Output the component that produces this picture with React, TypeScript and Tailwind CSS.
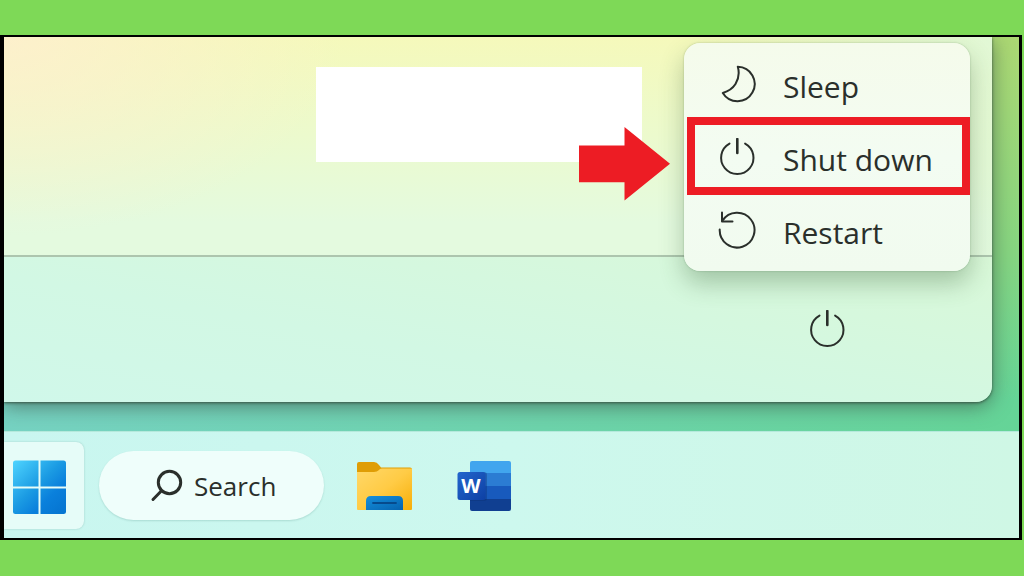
import type { ReactNode } from 'react';

interface IconProps {
  children: ReactNode;
}

function LineIcon({ children }: IconProps) {
  return (
    <svg
      viewBox="0 0 40 40"
      className="h-10 w-10 shrink-0"
      fill="none"
      stroke="currentColor"
      strokeWidth="2"
      strokeLinecap="round"
      strokeLinejoin="round"
      aria-hidden="true"
    >
      {children}
    </svg>
  );
}

function SleepIcon() {
  return (
    <LineIcon>
      <path d="M20.8 1.8A17.2 17.2 0 1 1 5.8 28C12 26 16 23 18.5 19C21.5 14 22.6 8 20.8 1.8Z" />
    </LineIcon>
  );
}

function PowerIcon() {
  return (
    <LineIcon>
      <path d="M12.5 5.6A16.2 16.2 0 1 0 28.1 5.6" />
      <path d="M20.3 1V15" strokeWidth="2.6" />
    </LineIcon>
  );
}

function RestartIcon() {
  return (
    <LineIcon>
      <path d="M2.7 18.5A17.4 17.4 0 1 0 5.4 9.8" />
      <path d="M5 1.5V10.5H15.5" />
    </LineIcon>
  );
}

function WindowsLogo() {
  return (
    <svg viewBox="0 0 54 54" className="h-[54px] w-[54px]" aria-hidden="true">
      <defs>
        <linearGradient id="panes" gradientUnits="userSpaceOnUse" x1="0" y1="0" x2="48" y2="50">
          <stop offset="0" stopColor="#4fd5ff" />
          <stop offset="0.5" stopColor="#1b9be3" />
          <stop offset="0.75" stopColor="#0a80dc" />
          <stop offset="1" stopColor="#0676d2" />
        </linearGradient>
      </defs>
      <path
        fill="url(#panes)"
        d="M2.5 0.5H25.5V26.5H0V3Q0 0.5 2.5 0.5ZM27.5 0.5H50.5Q53 0.5 53 3V26.5H27.5ZM0 28.5H25.5V54H2.5Q0 54 0 51.5ZM27.5 28.5H53V51.5Q53 54 50.5 54H27.5Z"
      />
    </svg>
  );
}

function FolderIcon() {
  return (
    <svg viewBox="0 0 56 50" className="h-[50px] w-14" aria-hidden="true">
      <defs>
        <linearGradient id="folder" x1="0" y1="0" x2="1" y2="1">
          <stop offset="0" stopColor="#ffd869" />
          <stop offset="0.5" stopColor="#ffcb45" />
          <stop offset="1" stopColor="#f7ae08" />
        </linearGradient>
        <linearGradient id="dock" x1="0" y1="0" x2="1" y2="1">
          <stop offset="0" stopColor="#1590dc" />
          <stop offset="1" stopColor="#0562ae" />
        </linearGradient>
      </defs>
      <path fill="#df9d05" d="M2 1H17Q20 1 22 4L24 6.5H53Q55 6.5 55 8.5V14H0V3Q0 1 2 1Z" />
      <path fill="url(#folder)" d="M0 11H17Q20 11 22 9L23 8Q24 7.5 25 7.5H55V48Q55 49 54 49H1Q0 49 0 48Z" />
      <path fill="url(#dock)" d="M9 49V40Q9 35 14 35H41Q46 35 46 40V49Z" />
      <path stroke="#064a8c" strokeWidth="1.8" strokeLinecap="round" d="M16 42H39" />
    </svg>
  );
}

function WordIcon() {
  return (
    <svg viewBox="0 0 56 52" className="h-[52px] w-14" aria-hidden="true">
      <defs>
        <linearGradient id="badge" x1="0" y1="0" x2="1" y2="1">
          <stop offset="0" stopColor="#2366cd" />
          <stop offset="1" stopColor="#0d40a4" />
        </linearGradient>
      </defs>
      <path fill="#41a5ee" d="M15 1H52Q54 1 54 3V13H13V3Q13 1 15 1Z" />
      <path fill="#2b7cd3" d="M13 13H54V26H13Z" />
      <path fill="#185abd" d="M13 26H54V39H13Z" />
      <path fill="#103f91" d="M13 39H54V49Q54 51 52 51H15Q13 51 13 49Z" />
      <path fill="#0b2f70" fillOpacity="0.35" d="M13 12H27Q30 12 30 15V38Q30 41 27 41H13Z" />
      <rect x="0.5" y="12" width="28" height="28" rx="2.5" fill="url(#badge)" />
      <text
        x="14"
        y="33"
        textAnchor="middle"
        fill="#fff"
        fontSize="20"
        fontWeight="700"
        fontFamily="Open Sans, sans-serif"
      >
        W
      </text>
    </svg>
  );
}

const powerOptions = [
  { label: 'Sleep', icon: <SleepIcon /> },
  { label: 'Shut down', icon: <PowerIcon />, highlighted: true },
  { label: 'Restart', icon: <RestartIcon /> },
];

function PowerMenu() {
  return (
    <div
      role="menu"
      className="absolute top-[6px] right-[22px] w-[286px] rounded-2xl bg-linear-to-b from-[#f5fbeb] via-[#f3fcf2] to-[#f1fbef] pt-[5px] pb-1 shadow-[0_12px_24px_rgba(50,90,50,0.32),0_0_2px_rgba(50,90,50,0.35)]"
    >
      {powerOptions.map((option) => (
        <button
          key={option.label}
          role="menuitem"
          className="relative flex h-[73px] w-full items-center gap-[26px] pl-[33px] text-left text-[30px] leading-10"
        >
          {option.icon}
          <span className="pt-1">{option.label}</span>
          {option.highlighted && (
            <span className="absolute -top-1 right-0 -bottom-px left-[3px] border-8 border-[#ed1c24]" />
          )}
        </button>
      ))}

      {/* Pointer to the highlighted option */}
      <svg viewBox="0 0 91 74" className="absolute top-[84px] -left-[105px] h-[74px] w-[91px]" aria-hidden="true">
        <path fill="#ed1c24" d="M0 18.5H45.5V0L91 36.7L45.5 73.5V55.3H0Z" />
      </svg>
    </div>
  );
}

function StartPanel() {
  return (
    <section className="relative mr-[27px] rounded-br-2xl shadow-[0_4px_20px_rgba(60,80,70,0.65),0_1px_3px_rgba(50,80,60,0.9)]">
      <div className="h-[220px] border-b-2 border-[#adc5ae] bg-[radial-gradient(ellipse_340px_200px_at_0_0,rgba(255,238,208,0.8),transparent),radial-gradient(ellipse_300px_300px_at_100%_0,rgba(222,248,218,0.85),transparent),linear-gradient(to_bottom,#f5f9bb,#edfacb_40%,#e4fadf_85%)] pt-[30px] pl-[312px]">
        <div className="h-[95px] w-[326px] bg-white" />
      </div>
      <div className="flex h-[145px] items-center justify-end rounded-br-2xl bg-[linear-gradient(10deg,#d0f8ea,#d2f8e4_40%,#d9f8d8)] pr-[137px]">
        <button aria-label="Power" className="p-2">
          <PowerIcon />
        </button>
      </div>
      <PowerMenu />
    </section>
  );
}

function Taskbar() {
  return (
    <nav className="relative flex h-[107px] items-center border-t border-[#b5e9dc] bg-linear-to-r from-[#c9f6f0] via-[#cdf8ee] to-[#cff7e5] pt-px">
      <button
        aria-label="Start"
        className="flex h-[87px] w-20 items-center rounded-r-lg bg-[#e6fcf8] pt-0.5 pl-[9px] shadow-[0_0_2px_rgba(40,110,100,0.3)]"
      >
        <WindowsLogo />
      </button>
      <button className="ml-[15px] flex h-[69px] w-[225px] items-center rounded-full bg-[#effefb] pl-[51px] text-[26px] leading-9 shadow-[0_1px_2px_rgba(40,110,100,0.2)]">
        <svg
          viewBox="0 0 34 34"
          className="h-[34px] w-[34px]"
          fill="none"
          stroke="currentColor"
          strokeWidth="3"
          strokeLinecap="round"
          aria-hidden="true"
        >
          <circle cx="19.5" cy="13.5" r="11.2" />
          <path d="M11.5 21.8L3 30.5" />
        </svg>
        <span className="pl-2.5">Search</span>
      </button>
      <button aria-label="File Explorer" className="ml-[33px]">
        <FolderIcon />
      </button>
      <button aria-label="Word" className="ml-11">
        <WordIcon />
      </button>
    </nav>
  );
}

export default function App() {
  return (
    <main className="min-h-screen bg-[#7ed957] pt-[35px] pr-[2px] pb-9 font-['Open_Sans','Noto_Sans',sans-serif] text-[#2a2f2b]">
      <div className="overflow-hidden border-y-2 border-r-[3px] border-l-4 border-black">
        <div className="bg-[linear-gradient(to_bottom,#acd873,#86d581_55%,transparent_92%),linear-gradient(to_right,#76d2c2,#65d497)] pb-[29px]">
          <StartPanel />
        </div>
        <Taskbar />
      </div>
    </main>
  );
}
